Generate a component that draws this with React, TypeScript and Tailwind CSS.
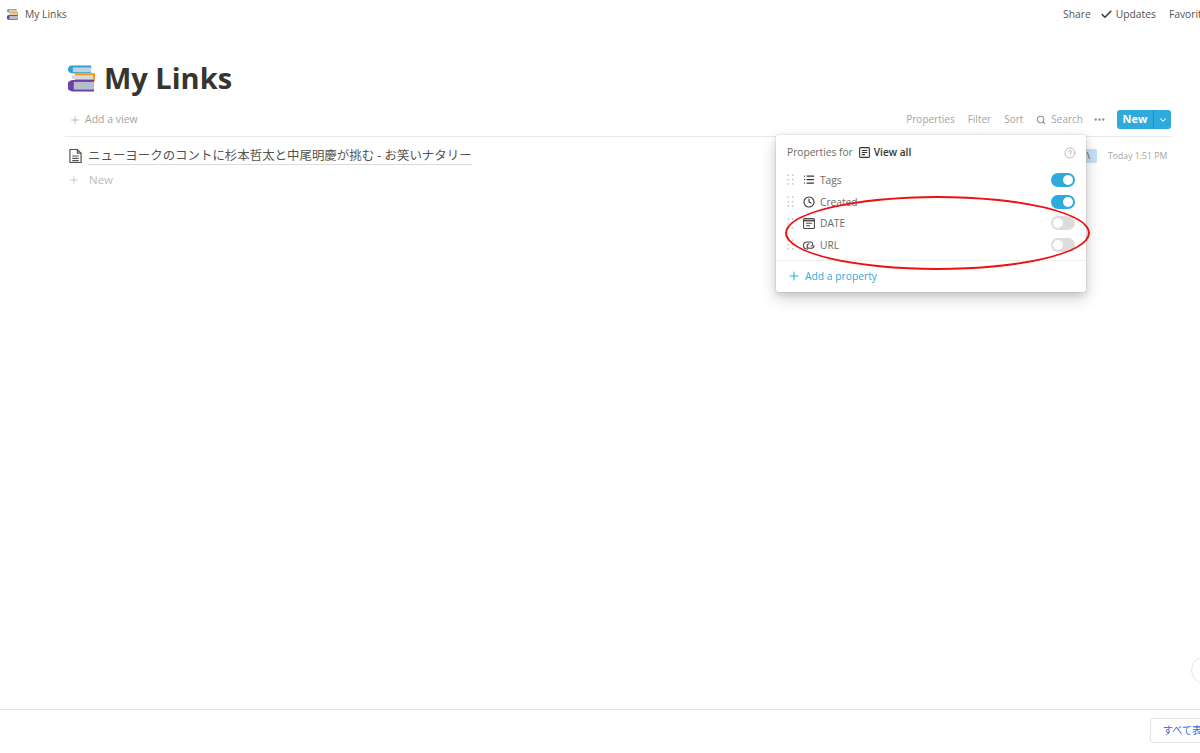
import { Check, ChevronDown, Clock, List, MoreHorizontal, Plus, Search, HelpCircle } from 'lucide-react';

const font = { sans: "font-['Open_Sans','Noto_Sans_CJK_JP',sans-serif]" };

function Books({ className }: { className: string }) {
  return (
    <svg viewBox="0 0 28 27" className={className}>
      <path d="M4 0h20v8H4a4 4 0 0 1 0-8z" fill="#2f9fd6" />
      <rect x="5" y="2" width="19" height="5" fill="#c6d2da" />
      <path d="M4 8h24v8H4a4 4 0 0 0 0-8z" fill="#f7960f" />
      <rect x="4" y="10" width="22" height="4" fill="#d7dce0" />
      <path d="M5 15h22v12H5a6 6 0 0 1 0-12z" fill="#6d3fa8" />
      <rect x="6" y="17" width="21" height="8" fill="#b4bfcc" />
    </svg>
  );
}

function PageIcon() {
  return (
    <svg viewBox="0 0 14 16" className="h-[16px] w-[13px] fill-none stroke-[#55534e]" strokeWidth="1.300">
      <path d="M1 1h8l4 4v10H1z" />
      <path d="M9 1v4h4M3.500 8h7M3.500 10.500h7M3.500 13h7" />
    </svg>
  );
}

function Grip() {
  return (
    <svg viewBox="0 0 8 12" className="h-[11px] w-[7px] fill-[#c8c7c4]">
      {[1, 6, 11].map((y) => (
        <g key={y}>
          <circle cx="1.500" cy={y} r="1" />
          <circle cx="6.500" cy={y} r="1" />
        </g>
      ))}
    </svg>
  );
}

function DateIcon() {
  return (
    <svg viewBox="0 0 12 12" className="h-[12px] w-[12px] fill-none stroke-[#4a4945]" strokeWidth="1.100">
      <rect x="0.600" y="1.500" width="10.800" height="10" rx="1" />
      <path d="M0.600 3.500h10.800" strokeWidth="1.800" />
      <path d="M3 6.300h6M3 8.800h4" />
    </svg>
  );
}

function UrlIcon() {
  return (
    <svg viewBox="0 0 12 12" className="h-[12px] w-[12px] fill-none stroke-[#4a4945]" strokeWidth="1.100">
      <path d="M5 10H4a3.500 3.500 0 0 1 0-7h3.500a2.200 2.200 0 0 1 .3 4.400" />
      <path d="M6.500 4.800a2.200 2.200 0 0 0-.2 4.500H8a3 3 0 0 0 3.200-3" />
    </svg>
  );
}

function ViewIcon() {
  return (
    <svg viewBox="0 0 12 12" className="h-[11px] w-[11px] fill-none stroke-[#37352f]" strokeWidth="1.200">
      <rect x="0.700" y="0.700" width="10.600" height="10.600" rx="1" />
      <path d="M3 3.800h6M3 6h6M3 8.300h3.500" />
    </svg>
  );
}

function Toggle({ on }: { on: boolean }) {
  return (
    <div className={on ? 'flex h-[14px] w-[24px] items-center justify-end rounded-full bg-[#2eaadc] p-[2px]' : 'flex h-[14px] w-[24px] items-center rounded-full bg-[#dddcda] p-[2px]'}>
      <div className="h-[10px] w-[10px] rounded-full bg-white" />
    </div>
  );
}

const properties = [
  { name: 'Tags', icon: <List className="h-[13px] w-[13px] text-[#37352f]" strokeWidth={2.500} />, on: true },
  { name: 'Created', icon: <Clock className="h-[12px] w-[12px] text-[#37352f]" strokeWidth={2.200} />, on: true },
  { name: 'DATE', icon: <DateIcon />, on: false },
  { name: 'URL', icon: <UrlIcon />, on: false },
];

export default function App() {
  return (
    <div className={`relative flex h-[753px] w-[1200px] flex-col overflow-hidden bg-white text-[#37352f] ${font.sans}`}>
      {/* Top bar */}
      <div className="flex h-[29px] items-center justify-between pl-[7px] text-[10.300px]">
        <div className="flex items-center gap-[7px]">
          <Books className="h-[11px] w-[11px]" />
          <span className="text-[#55534e]">My Links</span>
        </div>
        <div className="flex w-[137px] shrink-0 items-center whitespace-nowrap text-[#55534e]">
          <span>Share</span>
          <span className="ml-[9px] flex items-center gap-[3px]">
            <Check className="h-[13px] w-[13px] text-[#37352f]" strokeWidth={2.800} />
            Updates
          </span>
          <span className="ml-[13px]">Favorite</span>
        </div>
      </div>

      {/* Title */}
      <div className="flex items-center gap-[9px] pl-[68px] pt-[31px]">
        <Books className="h-[27px] w-[27px]" />
        <h1 className="text-[29px] leading-[36px] font-bold text-[#37352f]">My Links</h1>
      </div>

      {/* View toolbar */}
      <div className="mt-[7px] ml-[65px] mr-[29px] flex h-[34px] items-center justify-between border-b border-[#e9e9e7] pl-[4px] text-[#a5a4a0]">
        <div className="flex items-center gap-[4px] text-[10.500px]">
          <Plus className="h-[12px] w-[12px]" strokeWidth={1.500} />
          Add a view
        </div>
        <div className="flex items-center text-[10px]">
          <span>Properties</span>
          <span className="ml-[13px]">Filter</span>
          <span className="ml-[13px]">Sort</span>
          <Search className="ml-[13px] h-[10px] w-[10px] text-[#8c8b87]" strokeWidth={2.500} />
          <span className="ml-[5px]">Search</span>
          <MoreHorizontal className="ml-[10px] h-[13px] w-[13px] text-[#8c8b87]" strokeWidth={2.500} />
          <div className="ml-[11px] flex h-[19px] w-[54px] items-stretch rounded-[3px] bg-[#2eaadc] text-white">
            <span className="flex flex-1 items-center justify-center text-[11px] font-bold">New</span>
            <span className="flex w-[18px] items-center justify-center border-l border-[#2491bd]">
              <ChevronDown className="h-[10px] w-[10px]" strokeWidth={2.500} />
            </span>
          </div>
        </div>
      </div>

      {/* Row */}
      <div className="ml-[69px] mt-[11px] flex h-[16px] items-center gap-[6px]">
        <PageIcon />
        <span className="border-b border-[#dcdbd9] text-[12.450px] leading-[17px] text-[#55534e]">
          ニューヨークのコントに杉本哲太と中尾明慶が挑む - お笑いナタリー
        </span>
      </div>
      <div className="ml-[68px] mt-[8px] flex h-[16px] items-center gap-[9px] text-[11.500px] text-[#bdbcb9]">
        <Plus className="h-[12px] w-[12px]" strokeWidth={1.500} />
        New
      </div>

      <div className="flex-1" />

      {/* Bottom bar */}
      <div className="flex h-[44px] justify-end border-t border-[#e5e5e5] pt-[8px]">
        <div className="flex h-[25px] w-[50px] items-center overflow-hidden whitespace-nowrap rounded-l-[4px] border border-r-0 border-[#e3e3e3] pl-[12px] text-[10px] text-[#2a6fdb]">
          すべて表示
        </div>
      </div>

      {/* Cell behind the popup */}
      <div className="absolute left-[1080px] top-[149px] flex h-[14px] w-[17px] items-center justify-center rounded-[2px] bg-[#c9dff2] text-[9px] text-[#55534e]">
        \
      </div>
      <span className="absolute left-[1108px] top-[149px] text-[8.700px] leading-[14px] text-[#a5a4a0]">Today 1:51 PM</span>

      {/* Help button */}
      <div className="absolute left-[1191px] top-[656px] h-[28px] w-[28px] rounded-full border border-[#e5e5e5] bg-white" />

      {/* Properties popup */}
      <div className="absolute left-[776px] top-[135px] flex h-[157px] w-[310px] flex-col rounded-[3px] bg-white shadow-[0_0_0_1px_rgba(15,15,15,0.05),0_3px_6px_rgba(15,15,15,0.1),0_6px_16px_rgba(15,15,15,0.2)]">
        <div className="flex h-[34px] items-center justify-between pl-[11px] pr-[10px] pt-[1px] text-[10.200px]">
          <div className="flex items-center">
            <span className="text-[#6b6a66]">Properties for</span>
            <span className="ml-[6px]"><ViewIcon /></span>
            <span className="ml-[4px] font-semibold text-[#37352f]">View all</span>
          </div>
          <HelpCircle className="h-[12px] w-[12px] text-[#a5a4a0]" strokeWidth={1.500} />
        </div>
        <div className="flex flex-col">
          {properties.map((p) => (
            <div key={p.name} className="flex h-[21.700px] items-center pl-[11px] pr-[11px]">
              <Grip />
              <span className="ml-[9px] flex w-[12px] justify-center">{p.icon}</span>
              <span className="ml-[5px] flex-1 text-[10.200px] leading-[14px] text-[#6b6a66]">{p.name}</span>
              <Toggle on={p.on} />
            </div>
          ))}
        </div>
        <div className="mt-[4px] flex flex-1 items-center gap-[4px] border-t border-[#efefed] pl-[11px] text-[10.300px] text-[#2eaadc]">
          <Plus className="h-[14px] w-[14px]" strokeWidth={1.800} />
          Add a property
        </div>
      </div>

      {/* Red annotation */}
      <div className="absolute left-[785px] top-[196px] h-[74px] w-[305px] rounded-[50%] border-2 border-[#ee1111]" />
    </div>
  );
}
